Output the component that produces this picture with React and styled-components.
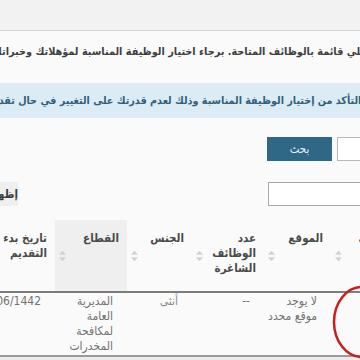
import React from 'react';
import styled, { createGlobalStyle } from 'styled-components';

const GlobalStyle = createGlobalStyle`
    html, body {
        margin: 0;
        padding: 0;
        background: #f7f7f7;
    }
    body {
        font-family: "DejaVu Sans Condensed", "DejaVu Sans", "Noto Sans", sans-serif;
        font-stretch: condensed;
    }
`;

const Viewport = styled.div`
    position: relative;
    width: 360px;
    height: 360px;
    overflow: hidden;
    background: #fafafa;
`;

// the page is wider than the window, the screenshot is a crop of it
const Page = styled.div`
    direction: rtl;
    width: 428px;
    margin-left: -40px;
    padding: 0 20px;
`;

const TopBar = styled.div`
    height: 30px;
    margin: 0 -20px;
    background: #f2f2f2;
    border-bottom: 1px solid #d6d6d6;
`;

const Intro = styled.p`
    margin: 0;
    padding: 13px 20px 23px 0;
    white-space: nowrap;
    font-size: 10.8px;
    line-height: 16px;
    font-weight: bold;
    color: #3f3f3f;
`;

const Alert = styled.div`
    margin: 0 -20px;
    padding: 10px 37px 9px 0;
    background: #dcecf4;
    color: #33607c;
    white-space: nowrap;
    font-size: 10.7px;
    line-height: 16px;
    font-weight: bold;
`;

const SearchRow = styled.div`
    display: flex;
    gap: 5px;
    margin-top: 19px;
    height: 24px;
`;

const Select = styled.div`
    width: 71px;
    box-sizing: border-box;
    border: 1px solid #b9b9b9;
    background: #fff;
    display: flex;
    align-items: center;
    justify-content: flex-end;
    direction: ltr;
    padding: 0 6px;
`;

const SearchButton = styled.button`
    width: 65px;
    border: none;
    background: #2f6887;
    color: #e8eef2;
    font-family: inherit;
    font-stretch: condensed;
    font-size: 11.5px;
    padding: 0;
`;

const FilterRow = styled.div`
    display: flex;
    align-items: center;
    margin-top: 21px;
    height: 24px;
`;

const SearchInput = styled.div`
    width: 140px;
    height: 24px;
    box-sizing: border-box;
    border: 1px solid #a9a9a9;
    background: #fff;
`;

const LengthLabel = styled.div`
    margin-right: auto;
    width: 38px;
    height: 24px;
    background: #efefef;
    font-size: 11.5px;
    font-weight: bold;
    line-height: 24px;
    color: #3d3d3d;
    text-align: right;
    white-space: nowrap;
    overflow: hidden;
`;

const Table = styled.table`
    margin-top: 14px;
    width: 428px;
    table-layout: fixed;
    border-collapse: collapse;
`;

const Th = styled.th`
    position: relative;
    vertical-align: top;
    text-align: right;
    padding: 11px 8px 15px 16px;
    font-size: 11.5px;
    line-height: 15px;
    font-weight: bold;
    color: #4a4a4a;
    background: ${p => (p.$sorted ? '#efefef' : 'transparent')};
    border-bottom: 2px solid #7d7d7d;
`;

const SortIcon = styled.svg`
    position: absolute;
    left: 4px;
    top: 50%;
    transform: translateY(-50%);
`;

const Td = styled.td`
    vertical-align: top;
    text-align: right;
    padding: 1px 14px 1px 0;
    font-size: 12px;
    line-height: 15px;
    color: ${p => p.$tone || '#727272'};
    border-bottom: 2px solid #9a9a9a;
    white-space: ${p => (p.$nowrap ? 'nowrap' : 'normal')};
`;

const Below = styled.div`
    height: 40px;
    margin: 0 -20px;
    background: #ececec;
`;

const Mark = styled.svg`
    position: absolute;
    left: 320px;
    top: 280px;
`;

const Sort = () => (
    <SortIcon width="7" height="11" viewBox="0 0 7 11">
        <path d="M3.5 0 L7 4.3 L0 4.3 Z M0 6.7 L7 6.7 L3.5 11 Z" fill="#d3d3d3" />
    </SortIcon>
);

const columns = [
    { title: 'الوظيفة', width: 77 },
    { title: 'الموقع', width: 67 },
    { title: 'عدد الوظائف الشاغرة', width: 72 },
    { title: 'الجنس', width: 65 },
    { title: 'القطاع', width: 72, sorted: true },
    { title: 'تاريخ بدء التقديم', width: 75 },
];

export default function App() {
    return (
        <Viewport>
            <GlobalStyle />
            <Page>
                <TopBar />
                <Intro>فيما يلي قائمة بالوظائف المتاحة. برجاء اختيار الوظيفة المناسبة لمؤهلاتك وخبراتك</Intro>
                <Alert>يرجى التأكد من إختيار الوظيفة المناسبة وذلك لعدم قدرتك على التغيير في حال تقدمك</Alert>
                <SearchRow>
                    <Select>
                        <svg width="10" height="8" viewBox="0 0 10 8">
                            <path d="M1.5 2 L5 5.5 L8.5 2" stroke="#444" strokeWidth="1.8" fill="none" />
                        </svg>
                    </Select>
                    <SearchButton>بحث</SearchButton>
                </SearchRow>
                <FilterRow>
                    <SearchInput />
                    <LengthLabel>إظهار</LengthLabel>
                </FilterRow>
                <Table>
                    <colgroup>
                        {columns.map(c => <col key={c.title} style={{ width: c.width }} />)}
                    </colgroup>
                    <thead>
                        <tr>
                            {columns.map(c => (
                                <Th key={c.title} $sorted={c.sorted}>
                                    {c.title}
                                    <Sort />
                                </Th>
                            ))}
                        </tr>
                    </thead>
                    <tbody>
                        <tr>
                            <Td $nowrap>أخصائية</Td>
                            <Td>لا يوجد موقع محدد</Td>
                            <Td>--</Td>
                            <Td $tone="#8a8a8a">أنثى</Td>
                            <Td>المديرية العامة لمكافحة المخدرات</Td>
                            <Td $nowrap>02/06/1442</Td>
                        </tr>
                    </tbody>
                </Table>
                <Below />
            </Page>
            <Mark width="60" height="80" viewBox="0 0 60 80">
                <ellipse cx="42" cy="42" rx="28" ry="35" fill="none" stroke="#c81e1e" strokeWidth="2.5" />
            </Mark>
        </Viewport>
    );
}
